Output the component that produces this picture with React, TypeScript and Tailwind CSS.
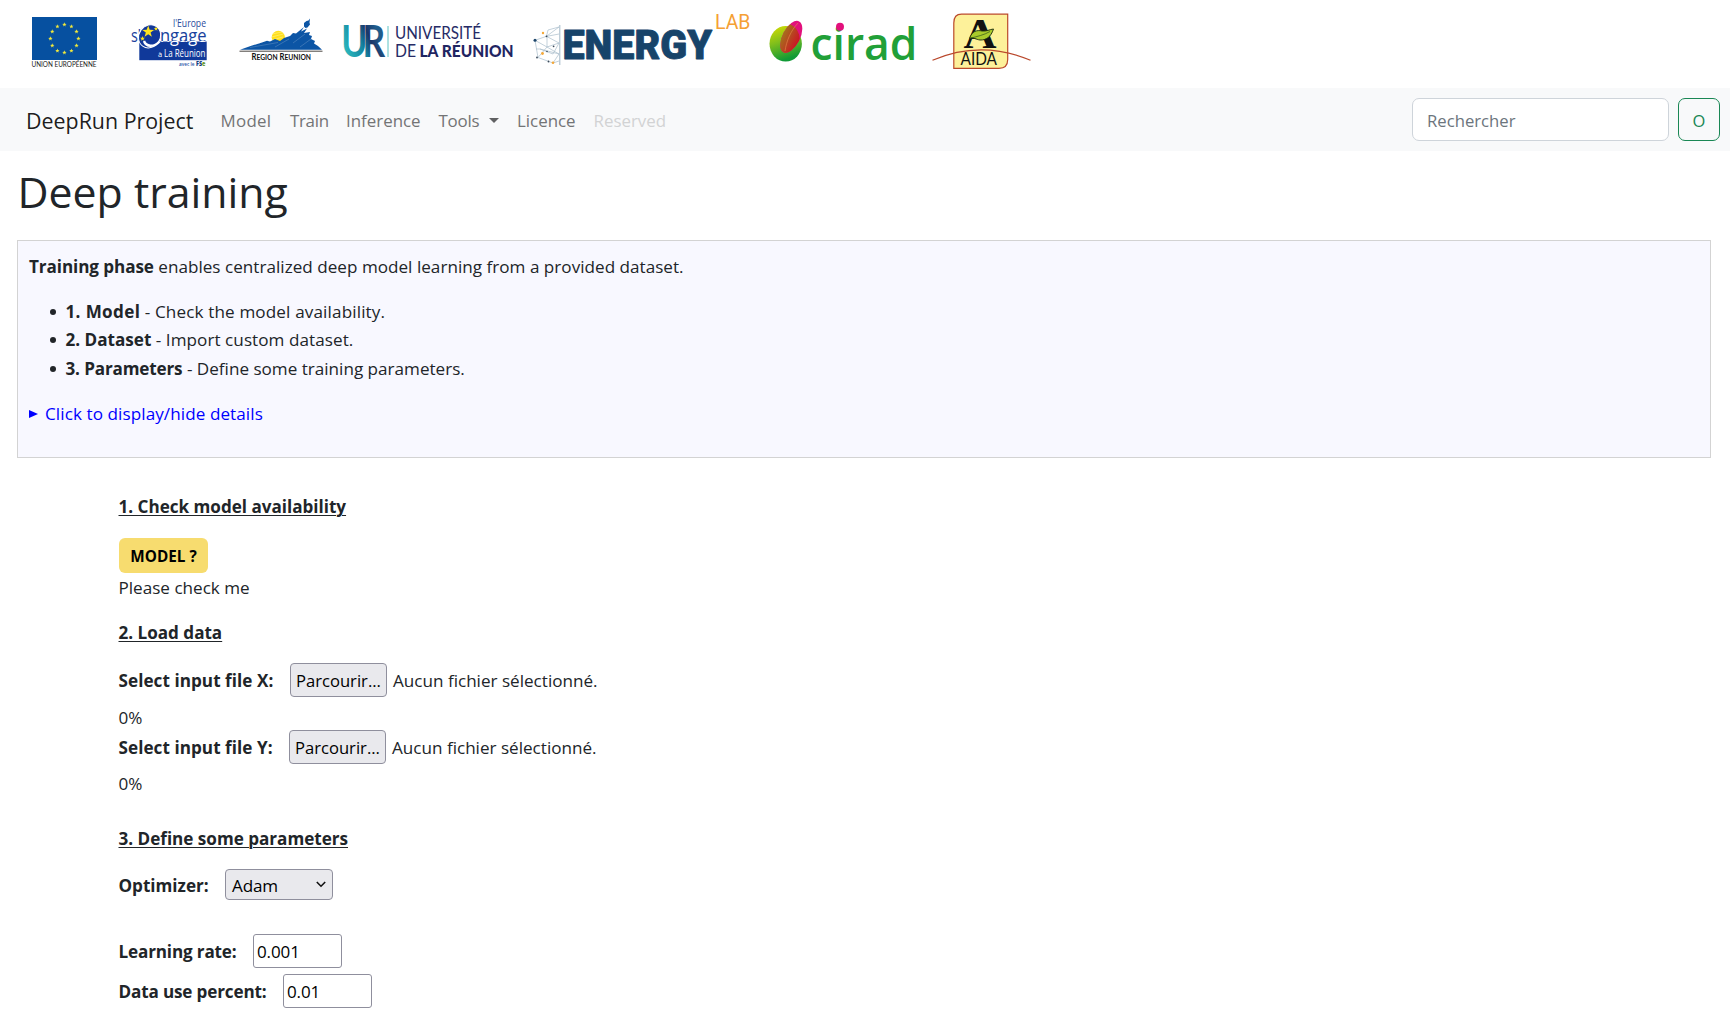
import type { ReactNode } from 'react'

const starPoints = (cx: number, cy: number, r: number) =>
  Array.from({ length: 10 }, (_, i) => {
    const a = -Math.PI / 2 + (i * Math.PI) / 5
    const q = i % 2 ? r * 0.4 : r
    return `${(cx + q * Math.cos(a)).toFixed(2)},${(cy + q * Math.sin(a)).toFixed(2)}`
  }).join(' ')

function EuropeanUnionLogo() {
  return (
    <svg className="ml-[30px] shrink-0" width="70" height="64" viewBox="30 10 70 64">
      <rect x="32" y="17" width="65" height="43" fill="#0650a0" />
      {Array.from({ length: 12 }, (_, i) => {
        const a = (i * Math.PI) / 6
        return <polygon key={i} points={starPoints(64.4 + 14 * Math.cos(a), 38.6 + 14 * Math.sin(a), 2.3)} fill="#f4ea3a" />
      })}
      <text x="31.5" y="67.3" fontSize="7" textLength="65" lengthAdjust="spacingAndGlyphs" fill="#222" className="font-['Lato']">UNION EUROPÉENNE</text>
    </svg>
  )
}

function EngageLogo() {
  return (
    <svg className="ml-[28px] shrink-0" width="82" height="64" viewBox="128 10 82 64">
      <defs>
        <linearGradient id="split" gradientUnits="userSpaceOnUse" x1="0" y1="41" x2="0" y2="42">
          <stop offset=".5" stopColor="#1c3f9b" />
          <stop offset=".5" stopColor="#ffffff" />
        </linearGradient>
      </defs>
      <text x="173" y="27" fontSize="10.5" textLength="33" lengthAdjust="spacingAndGlyphs" fill="#2a4a9c" className="font-['Open_Sans']">l'Europe</text>
      <rect x="139.3" y="41.5" width="67.4" height="18.7" fill="#10399a" />
      <text x="131" y="41.5" fontSize="19" textLength="10" lengthAdjust="spacingAndGlyphs" fill="#1c3f9b" className="font-['Open_Sans'] font-medium">s'</text>
      <text x="160" y="41.5" fontSize="19" textLength="46.5" lengthAdjust="spacingAndGlyphs" fill="url(#split)" className="font-['Open_Sans'] font-medium">ngage</text>
      <ellipse cx="149.6" cy="36.3" rx="10.6" ry="12" transform="rotate(35 149.6 36.3)" fill="#12389a" stroke="#fff" strokeWidth="1" />
      <path d="M144 41c2 6 10 6.500 15.500 .500" fill="none" stroke="#fff" strokeWidth="2.400" />
      <polygon points={starPoints(148.2, 31.8, 6.2)} fill="#ffe51f" />
      <polygon points={starPoints(156, 28.8, 2.4)} fill="#ffe51f" />
      <polygon points={starPoints(142.5, 38.6, 2.6)} fill="#ffe51f" />
      <text x="158" y="57.3" fontSize="7.500" fill="#fff" className="font-['Open_Sans']">à</text>
      <text x="164" y="57.3" fontSize="10.5" textLength="41.5" lengthAdjust="spacingAndGlyphs" fill="#fff" className="font-['Open_Sans']">La Réunion</text>
      <text x="179" y="65.5" fontSize="6" textLength="15.500" lengthAdjust="spacingAndGlyphs" fill="#2a56a8" className="font-['Open_Sans'] font-semibold">avec le</text>
      <text x="196" y="65.5" fontSize="6.300" textLength="9.500" lengthAdjust="spacingAndGlyphs" fill="#123b80" className="font-['Open_Sans'] font-extrabold">FS<tspan fill="#6f9a34">e</tspan></text>
    </svg>
  )
}

function RegionLogo() {
  return (
    <svg className="ml-[26px] shrink-0" width="90" height="64" viewBox="236 10 90 64">
      <circle cx="278.3" cy="37.3" r="6.6" fill="#ffdf1c" />
      <path d="M272 34l10-2M271.500 37l12-3M272 40l11-3" stroke="#fff3a0" strokeWidth=".5" />
      <path d="M240 49.800L252 45.500L262 42.500L267 40.800L270 41.500L275 39L280 41L284 38L290 36L293 33L296 33.500L304 27L301 31.500L307 28.500L304 33L310 32L309 35L312 36L311 39L315 41L314 43.500L318 46L322 49.800Z" fill="#0c55a5" />
      <path d="M243 47l17-4M250 47.500l28-5M275 47l14-8M293 43l12-9M300 47l11-8" stroke="#fff" strokeWidth=".6" opacity=".3" />
      <path d="M304 25.500l0-2.500 2.500-2 2-.500 1.500-2-.5 4 .5 2-2.500 3-2 .500-1.500-1.500z" fill="#0c55a5" />
      <path d="M239.500 51.200H322.500" stroke="#4a4642" strokeWidth="1" />
      <text x="251.500" y="60" fontSize="8.800" textLength="59.500" lengthAdjust="spacingAndGlyphs" fill="#111" className="font-['Lato'] font-bold">R<tspan fontSize="7.600">EGION</tspan> R<tspan fontSize="7.600">EUNION</tspan></text>
    </svg>
  )
}

function UniversityLogo() {
  return (
    <svg className="ml-[14px] shrink-0" width="176" height="64" viewBox="340 10 176 64">
      <defs>
        <linearGradient id="ur" gradientUnits="userSpaceOnUse" x1="344" y1="50" x2="379" y2="36">
          <stop offset="0" stopColor="#2bb9bd" />
          <stop offset=".5" stopColor="#1483a0" />
          <stop offset=".75" stopColor="#1c3568" />
          <stop offset="1" stopColor="#1f5c8c" />
        </linearGradient>
      </defs>
      <text x="341.200" y="57" fontSize="43" textLength="39" lengthAdjust="spacingAndGlyphs" letterSpacing="-6" fill="url(#ur)" className="font-['Lato'] font-bold">UR</text>
      <path d="M388 26v31" stroke="#5cc4c4" strokeWidth="1" />
      <text x="395" y="39" fontSize="17.500" textLength="86" lengthAdjust="spacingAndGlyphs" fill="#262b66" className="font-['Lato']">UNIVERSITÉ</text>
      <text x="395" y="57" fontSize="16.500" textLength="21" lengthAdjust="spacingAndGlyphs" fill="#262b66" className="font-['Lato']">DE</text>
      <text x="419.500" y="57" fontSize="16.500" textLength="94" lengthAdjust="spacingAndGlyphs" fill="#1f2562" className="font-['Lato'] font-black">LA RÉUNION</text>
    </svg>
  )
}

function EnergyLabLogo() {
  return (
    <svg className="ml-[14px] shrink-0" width="222" height="64" viewBox="530 10 222 64">
      <g fill="none" stroke="#a9bdcb" strokeWidth=".7">
        <path d="M559.800 25v40" strokeWidth="1.100" />
        <path d="M535 40.300L546.500 36.300L559 27L548 30L546.500 36.300L559 43L547 47L535 40.300L538 57.500L553 63L559 54L547 47V36.300L559 34M540 49l13 5 6-11M547 47L538 57.500M540 49h-4M553 63l6-2M540 49l19 5" />
      </g>
      <circle cx="535" cy="40.300" r="1.500" fill="#1c456b" />
      <g fill="#3b4a5a">
        <circle cx="546.500" cy="36.300" r=".9" /><circle cx="553.600" cy="46.300" r=".9" /><circle cx="547" cy="51.500" r=".8" />
        <circle cx="537" cy="57.500" r=".9" /><circle cx="548.500" cy="61.500" r=".9" />
      </g>
      <g fill="#f5a93a"><circle cx="543" cy="33" r="1.200" /><circle cx="542.500" cy="53.500" r="1.400" /><circle cx="553" cy="62.800" r="1.300" /></g>
      <text x="562.500" y="59" fontSize="41.500" textLength="149.500" lengthAdjust="spacingAndGlyphs" fill="#17446a" stroke="#17446a" strokeWidth=".9" strokeLinejoin="round" className="font-['Roboto'] font-black">ENERGY</text>
      <text x="715" y="29" fontSize="19.500" textLength="35.500" lengthAdjust="spacingAndGlyphs" fill="#f5a034" className="font-['Roboto']">LAB</text>
    </svg>
  )
}

function CiradLogo() {
  return (
    <svg className="ml-[14px] shrink-0" width="152" height="64" viewBox="766 10 152 64">
      <defs>
        <linearGradient id="ball" x1="0" y1="0" x2=".3" y2="1">
          <stop offset="0" stopColor="#d9de00" /><stop offset=".5" stopColor="#7fbe1c" /><stop offset="1" stopColor="#109a36" />
        </linearGradient>
        <linearGradient id="overlap" x1="0" y1="0" x2="1" y2="0">
          <stop offset="0" stopColor="#a5701c" /><stop offset="1" stopColor="#cc1424" />
        </linearGradient>
        <clipPath id="ballclip"><ellipse cx="785.700" cy="43.800" rx="16.200" ry="17.800" /></clipPath>
      </defs>
      <ellipse cx="785.700" cy="43.800" rx="16.200" ry="17.800" fill="url(#ball)" />
      <ellipse cx="791.300" cy="36.800" rx="8.700" ry="17.300" transform="rotate(27 791.300 36.800)" fill="#e2107c" />
      <ellipse cx="791.300" cy="36.800" rx="8.700" ry="17.300" transform="rotate(27 791.300 36.800)" fill="url(#overlap)" clipPath="url(#ballclip)" />
      <path d="M785 51c1.500-10 5.500-20 13-28" fill="none" stroke="#e88a4a" strokeWidth=".6" />
      <text x="810.500" y="59.500" fontSize="46" textLength="107" lengthAdjust="spacingAndGlyphs" fill="#21a038" className="font-['Open_Sans'] font-semibold">cirad</text>
      <circle cx="840" cy="26.800" r="4" fill="#e2107c" />
    </svg>
  )
}

function AidaLogo() {
  return (
    <svg className="ml-[12px] shrink-0" width="103" height="64" viewBox="930 10 103 64">
      <path d="M961.500 14.200H1007.700V59.500Q1007.700 68.300 999 68.300H953.800V23Q953.800 14.200 961.500 14.200Z" fill="#fdf19a" stroke="#bb4a2b" strokeWidth="1.200" />
      <text x="963.500" y="47.500" fontSize="43" textLength="33" lengthAdjust="spacingAndGlyphs" fill="#111" className="font-['Liberation_Serif'] font-bold">A</text>
      <path d="M969.500 38.500C972 31 977 29.800 982 31C987 31.500 989 29.500 993.500 29C991 37 986 40.300 980 40C976 39.500 973 37 969.500 38.500Z" fill="#a9cb2b" stroke="#1a2a10" strokeWidth=".9" />
      <path d="M970 38.300C977 36.500 984 35 990 31.500" fill="none" stroke="#31501a" strokeWidth=".7" />
      <path d="M932.500 60.300Q981 39.500 1030.500 60.300" fill="none" stroke="#b9472b" strokeWidth="1.200" />
      <text x="960.500" y="65" fontSize="16.500" textLength="36.500" lengthAdjust="spacingAndGlyphs" fill="#111" className="font-['Lato']">AIDA</text>
    </svg>
  )
}

const field = 'h-[34px] w-[89px] rounded-[3px] border border-[#8f8f9d] bg-white pt-px pl-[3px] text-[17px] tracking-[-0.1px] text-black outline-none'

function Section({ children }: { children: ReactNode }) {
  return <h2 className="font-bold tracking-[-0.010px] underline decoration-1 underline-offset-[2px]">{children}</h2>
}

function FileRow({ label, gap }: { label: string; gap: string }) {
  return (
    <div className="flex h-[34px] items-center">
      <label className={`pt-[2px] font-bold tracking-[0.060px] ${gap}`}>{label}</label>
      <button className="h-[34px] w-[97px] rounded-[4px] border border-[#8f8f9d] bg-[#e9e9ed] pt-[2px] text-[16.600px] text-black">Parcourir...</button>
      <span className="ml-[6px] pt-[2px]">Aucun fichier sélectionné.</span>
    </div>
  )
}

export default function App() {
  return (
    <div className="h-[1029px] overflow-hidden bg-white font-['Open_Sans',sans-serif] text-[17.100px] leading-[28px] text-[#212529]">
      <header className="flex h-[88px] items-start pt-[10px]">
        <EuropeanUnionLogo />
        <EngageLogo />
        <RegionLogo />
        <UniversityLogo />
        <EnergyLabLogo />
        <CiradLogo />
        <AidaLogo />
      </header>

      <nav className="flex h-[63px] items-center bg-[#f8f9fa] pr-[10px] pl-[26px] whitespace-nowrap">
        <a className="w-[194.500px] pt-[2px] text-[21.400px] text-black/90">DeepRun Project</a>
        <div className="flex pt-[2px] text-[16.900px] text-[#737475]">
          <a className="w-[69.500px] tracking-[0.300px]">Model</a>
          <a className="w-[56px] tracking-[-0.300px]">Train</a>
          <a className="w-[92.500px]">Inference</a>
          <a className="flex w-[78.500px] tracking-[-0.200px]">
            Tools
            <span className="mt-[11px] ml-[10px] self-start border-x-[5px] border-t-[5px] border-x-transparent border-t-[#606162]" />
          </a>
          <a className="w-[76.500px]">Licence</a>
          <a className="text-[#d2d3d4]">Reserved</a>
        </div>
        <input className="ml-auto h-[43px] w-[257px] rounded-[7px] border border-[#ced4da] bg-white pt-px pl-[14px] text-[16.700px] outline-none placeholder:text-[#6c757d]" placeholder="Rechercher" />
        <button className="ml-[9px] h-[43px] w-[42px] rounded-[7px] border border-[#198754] pt-[2px] text-[16.500px] text-[#198754]">O</button>
      </nav>

      <h1 className="mt-[14px] ml-[17.500px] text-[42.800px] leading-[54px]">Deep training</h1>

      <section className="mt-[21px] mr-[19px] ml-[17px] h-[218px] border border-[#d3d3d3] bg-[#f8f8ff] px-[11px] pt-[12px]">
        <p><b className="tracking-[-0.080px]">Training phase</b> <span className="tracking-[0.020px]">enables centralized deep model learning from a provided dataset.</span></p>
        <ul className="mt-[16.600px] pl-[20.500px] leading-[28.500px]">
          <li className="flex items-center gap-[10px] before:size-[6px] before:rounded-full before:bg-[#212529]"><span><b className="tracking-[0.350px]">1. Model</b> <span className="tracking-[0.140px]">- Check the model availability.</span></span></li>
          <li className="flex items-center gap-[10px] before:size-[6px] before:rounded-full before:bg-[#212529]"><span><b>2. Dataset</b> <span className="tracking-[0.060px]">- Import custom dataset.</span></span></li>
          <li className="flex items-center gap-[10px] before:size-[6px] before:rounded-full before:bg-[#212529]"><span><b className="tracking-[-0.150px]">3. Parameters</b> - Define some training parameters.</span></li>
        </ul>
        <div className="mt-[17.400px] flex items-center tracking-[0.080px] text-[#0000ff]">
          <span className="mr-[7px] border-y-[4.500px] border-l-[9px] border-y-transparent border-l-[#0000ff]" />
          Click to display/hide details
        </div>
      </section>

      <main className="ml-[118.500px] pt-[35px]">
        <Section>1. Check model availability</Section>
        <button className="mt-[17px] block h-[35px] w-[89px] rounded-[6px] bg-[#f7dc6f] pt-px pl-px text-[15.300px] font-bold text-black">MODEL ?</button>
        <p className="mt-px">Please check me</p>
        <div className="mt-[17px]"><Section>2. Load data</Section></div>
        <div className="mt-[16px]"><FileRow label="Select input file X:" gap="w-[171.500px]" /></div>
        <p className="mt-[7px]">0%</p>
        <div className="-mt-[2px]"><FileRow label="Select input file Y:" gap="w-[170.500px]" /></div>
        <p className="mt-[6px]">0%</p>
        <div className="mt-[27px]"><Section>3. Define some parameters</Section></div>
        <div className="mt-[16px] flex h-[31px] items-center">
          <label className="w-[106.500px] pt-[2px] font-bold">Optimizer:</label>
          <div className="flex h-[31px] w-[108px] items-center justify-between rounded-[4px] border border-[#8f8f9d] bg-[#e9e9ed] pr-[6px] pl-[6px] text-black">
            <span className="pt-[2px] tracking-[-0.150px]">Adam</span>
            <svg width="10" height="7" viewBox="0 0 10 7" fill="none" stroke="#111" strokeWidth="1.600"><path d="M.8 1L5 5.200L9.200 1" /></svg>
          </div>
        </div>
        <div className="mt-[34px] flex h-[34px] items-center">
          <label className="w-[134.500px] pt-[2px] font-bold tracking-[-0.150px]">Learning rate:</label>
          <input className={field} defaultValue="0.001" />
        </div>
        <div className="mt-[6px] flex h-[34px] items-center">
          <label className="w-[164.500px] pt-[2px] font-bold tracking-[-0.150px]">Data use percent:</label>
          <input className={field} defaultValue="0.01" />
        </div>
      </main>
    </div>
  )
}
